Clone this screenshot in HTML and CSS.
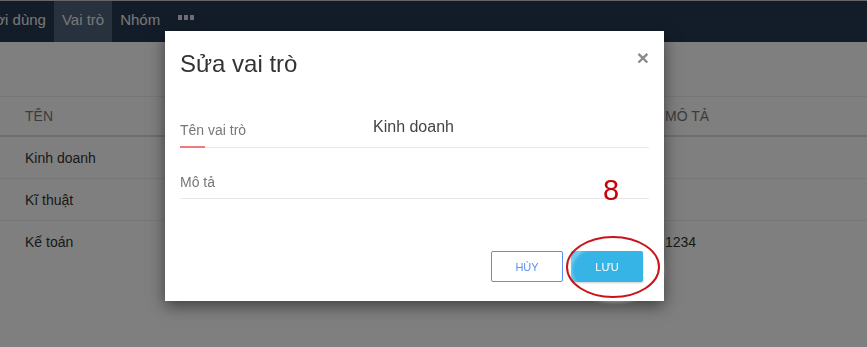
FILE: index.html
```html
<!DOCTYPE html>
<html lang="vi">
<head>
  <meta charset="UTF-8" />
  <meta name="viewport" content="width=device-width, initial-scale=1.0"/>
  <title>Vai trò</title>
  <link rel="stylesheet" href="styles.css">
</head>
<body>
  <nav class="thanh-menu">
    <a href="#">Người dùng</a>
    <a href="#" class="dang-chon">Vai trò</a>
    <a href="#">Nhóm</a>
    <a href="#" class="them"><span></span><span></span><span></span></a>
  </nav>

  <main class="noi-dung">
    <table class="bang">
      <colgroup>
        <col class="cot-ten">
        <col>
      </colgroup>
      <thead>
        <tr><th>Tên</th><th>Mô tả</th></tr>
      </thead>
      <tbody>
        <tr><td>Kinh doanh</td><td></td></tr>
        <tr><td>Kĩ thuật</td><td></td></tr>
        <tr><td>Kế toán</td><td>1234</td></tr>
      </tbody>
    </table>
  </main>

  <div class="nen-mo"></div>

  <div class="hop-thoai">
    <div class="dau">
      <h2>Sửa vai trò</h2>
      <button class="dong">&times;</button>
    </div>
    <div class="than">
      <div class="dong-form">
        <label class="nhan dang-nhap">Tên vai trò</label>
        <span class="gia-tri">Kinh doanh</span>
      </div>
      <div class="dong-form">
        <label class="nhan">Mô tả</label>
        <span class="gia-tri"></span>
      </div>
    </div>
    <div class="chan">
      <button class="nut nut-huy">HỦY</button>
      <button class="nut nut-luu">LƯU</button>
    </div>
  </div>

  <!-- ghi chú đánh dấu -->
  <div class="so-buoc">8</div>
  <svg class="vong-do" width="110" height="76" viewBox="0 0 110 76">
    <ellipse cx="55" cy="37" rx="46" ry="30" fill="none" stroke="#c8141b" stroke-width="2"/>
  </svg>
</body>
</html>
```

FILE: styles.css
```css
body {
  margin: 0;
  font-family: "Liberation Sans", Arial, sans-serif;
  background-color: #fff;
  overflow: hidden;
}

.thanh-menu {
  display: flex;
  height: 41px;
  margin-left: -42px;
  border-top: 1px solid #ccc;
  background-color: #263a52;
}

.thanh-menu a {
  display: flex;
  align-items: center;
  padding: 0 8px 4px 8px;
  font-size: 15px;
  color: #eee;
  text-decoration: none;
}

.thanh-menu .dang-chon {
  background-color: #50627c;
}

.thanh-menu .them {
  gap: 2px;
  padding: 0 10px 8px 10px;
}

.them span {
  width: 4px;
  height: 5px;
  background-color: #dde;
}

.noi-dung {
  padding-top: 54px;
}

.bang {
  width: 100%;
  table-layout: fixed;
  border-collapse: collapse;
  font-size: 14px;
}

.cot-ten {
  width: 663px;
}

.bang th,
.bang td {
  padding: 0 25px;
  text-align: left;
  border-top: 1px solid #eee;
}

.bang th {
  height: 38px;
  font-weight: normal;
  text-transform: uppercase;
  color: #777;
  border-bottom: 2px solid #ddd;
}

.bang td {
  height: 41px;
  color: #333;
}

.bang th:last-child,
.bang td:last-child {
  padding-left: 2px;
}

.nen-mo {
  position: fixed;
  inset: 0;
  background-color: rgba(0, 0, 0, 0.5);
}

.hop-thoai {
  position: absolute;
  left: 165px;
  top: 31px;
  width: 499px;
  height: 270px;
  background-color: #fff;
  box-shadow: 0 5px 15px rgba(0, 0, 0, 0.5);
  display: flex;
  flex-direction: column;
}

.dau {
  display: flex;
  justify-content: space-between;
  padding: 19px 15px 0 15px;
}

.dau h2 {
  margin: 0;
  font-size: 24px;
  font-weight: normal;
  color: #333;
}

.dong {
  border: none;
  background: none;
  padding: 0;
  margin-top: -12px;
  font-size: 21px;
  font-weight: bold;
  color: #8a8a8a;
  cursor: pointer;
  font-family: inherit;
}

.than {
  padding: 23px 15px 0 15px;
}

.dong-form {
  display: flex;
  align-items: flex-end;
  height: 46px;
  border-bottom: 1px solid #e8e8e8;
  position: relative;
}

.dong-form + .dong-form {
  height: 50px;
}

.nhan {
  width: 193px;
  font-size: 14px;
  color: #777;
  padding-bottom: 9px;
}

.dong-form + .dong-form .nhan {
  padding-bottom: 8px;
}

.dang-nhap::after {
  content: "";
  position: absolute;
  left: 0;
  bottom: -1px;
  width: 25px;
  height: 2px;
  background-color: #f07a7a;
}

.gia-tri {
  font-size: 16px;
  color: #444;
  padding-bottom: 11px;
}

.chan {
  display: flex;
  justify-content: flex-end;
  gap: 8px;
  padding: 52px 21px 0 0;
}

.nut {
  width: 72px;
  height: 31px;
  font-size: 11px;
  font-family: inherit;
  border-radius: 2px;
  cursor: pointer;
}

.nut-huy {
  background-color: #fff;
  border: 1px solid #5b8ff0;
  color: #5b8ff0;
}

.nut-luu {
  background-color: #36b4e5;
  border: none;
  color: #fff;
  box-shadow: 0 1px 2px rgba(0, 0, 0, 0.2);
}

.so-buoc {
  position: absolute;
  left: 603px;
  top: 174px;
  font-size: 29px;
  color: #c8000a;
}

.vong-do {
  position: absolute;
  left: 558px;
  top: 230px;
  filter: drop-shadow(2px 3px 2px rgba(255, 255, 255, 0.9));
}
```
